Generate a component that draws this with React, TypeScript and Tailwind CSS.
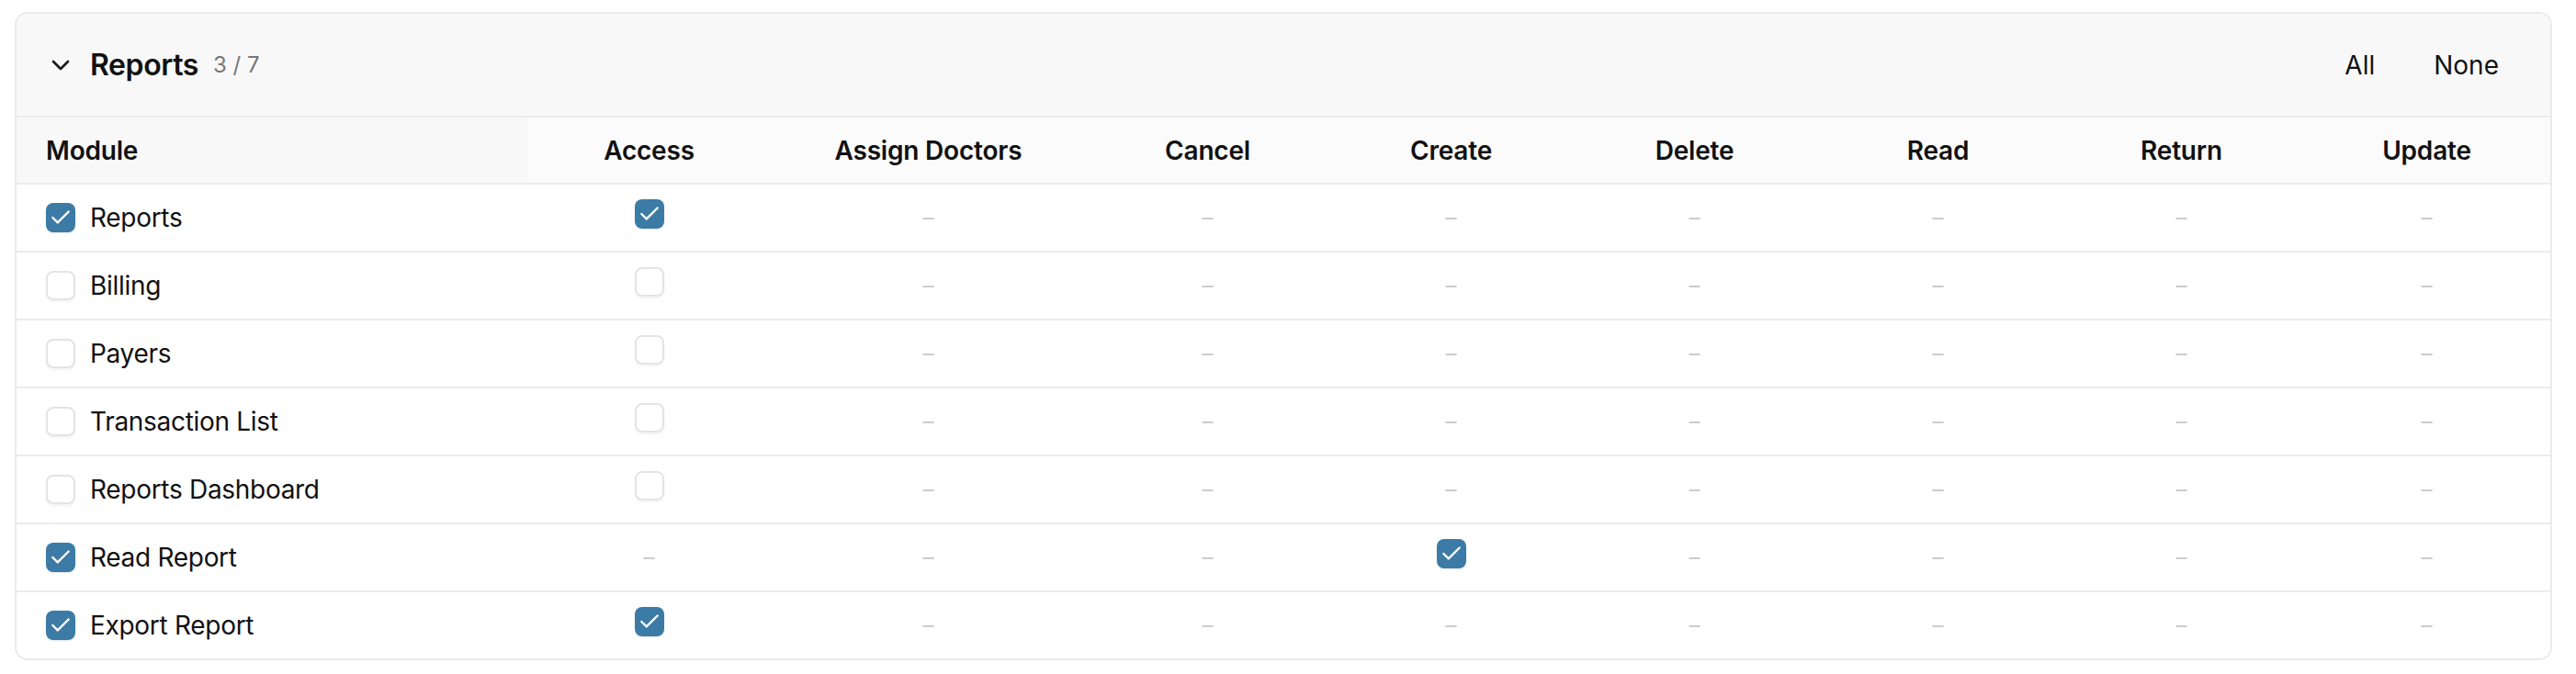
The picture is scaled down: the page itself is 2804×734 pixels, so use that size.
import { Check, ChevronDown } from 'lucide-react';

const COLS = ['Access', 'Assign Doctors', 'Cancel', 'Create', 'Delete', 'Read', 'Return', 'Update'];

type Cell = boolean | null;

const ROWS: { name: string; checked: boolean; cells: Cell[] }[] = [
  { name: 'Reports', checked: true, cells: [true, null, null, null, null, null, null, null] },
  { name: 'Billing', checked: false, cells: [false, null, null, null, null, null, null, null] },
  { name: 'Payers', checked: false, cells: [false, null, null, null, null, null, null, null] },
  { name: 'Transaction List', checked: false, cells: [false, null, null, null, null, null, null, null] },
  { name: 'Reports Dashboard', checked: false, cells: [false, null, null, null, null, null, null, null] },
  { name: 'Read Report', checked: true, cells: [null, null, null, true, null, null, null, null] },
  { name: 'Export Report', checked: true, cells: [true, null, null, null, null, null, null, null] },
];

const GRID = 'grid grid-cols-[556px_265px_343px_265px_265px_265px_265px_265px_1fr]';

function Box({ checked }: { checked: boolean }) {
  if (checked) {
    return (
      <span className="flex h-[32px] w-[32px] shrink-0 items-center justify-center rounded-[8px] bg-[#3b7ba5] shadow-[0_1px_2px_rgba(0,0,0,0.1)]">
        <Check size={26} strokeWidth={2.2} className="text-white" />
      </span>
    );
  }
  return (
    <span className="block h-[32px] w-[32px] shrink-0 rounded-[8px] border-2 border-[#e4e4e4] bg-white shadow-[0_2px_3px_rgba(0,0,0,0.05)]" />
  );
}

function Dash() {
  return <span className="text-[24px] leading-none text-[#cccccc]">–</span>;
}

export default function App() {
  return (
    <div className="min-h-[734px] w-[2804px] bg-white pt-[13px] pl-[16px] font-['Inter','Noto_Sans',sans-serif] text-[#111111]">
      <div className="w-[2762px] overflow-hidden rounded-[14px] border-2 border-[#ebebeb] bg-white">
        <div className="flex h-[113px] items-center justify-between border-b-2 border-[#ececec] bg-[#f8f8f8] pl-[32px] pr-[32px]">
          <div className="flex items-center gap-[16px]">
            <ChevronDown size={32} strokeWidth={2} className="text-[#1a1a1a]" />
            <div className="flex items-center gap-[16px]">
              <span className="text-[32px] font-semibold leading-none tracking-[-0.4px]">Reports</span>
              <span className="text-[24px] leading-none text-[#777777]">3 / 7</span>
            </div>
          </div>
          <div className="flex items-center gap-[16px]">
            <button className="px-[24px] py-[8px] text-[28px] leading-none text-[#111111]">All</button>
            <button className="px-[24px] py-[8px] text-[28px] leading-none text-[#111111]">None</button>
          </div>
        </div>

        <div className={`${GRID} h-[73px] border-b-2 border-[#ececec] bg-[#fbfbfb] text-[28px] font-semibold tracking-[-0.2px]`}>
          <div className="flex items-center bg-[#f8f8f8] pl-[32px]">Module</div>
          {COLS.map((c) => (
            <div key={c} className="flex items-center justify-center">
              {c}
            </div>
          ))}
        </div>

        {ROWS.map((r) => (
          <div
            key={r.name}
            className={`${GRID} h-[74px] border-b-2 border-[#ececec] last:h-[72px] last:border-b-0`}
          >
            <div className="flex items-center gap-[16px] pl-[32px] text-[28px] tracking-[-0.3px]">
              <Box checked={r.checked} />
              <span>{r.name}</span>
            </div>
            {r.cells.map((v, i) => (
              <div key={i} className="flex items-center justify-center">
                {v === null ? (
                  <Dash />
                ) : (
                  <span className="mb-[8px]">
                    <Box checked={v} />
                  </span>
                )}
              </div>
            ))}
          </div>
        ))}
      </div>
    </div>
  );
}
